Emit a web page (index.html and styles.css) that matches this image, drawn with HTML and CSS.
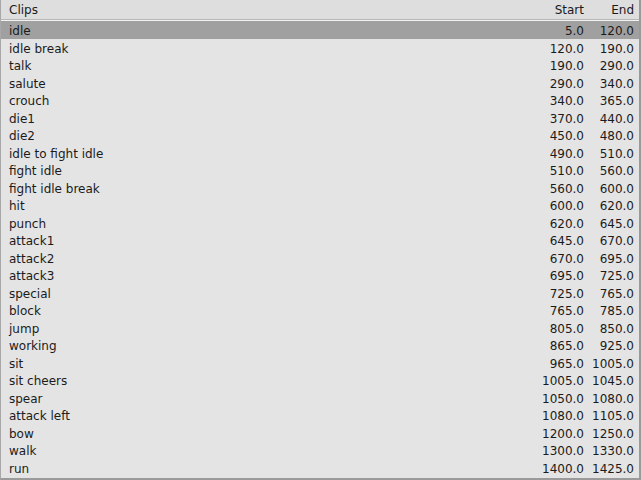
FILE: index.html
```html
<!DOCTYPE html>
<html>
<head>
<meta charset="utf-8">
<link rel="stylesheet" href="styles.css">
</head>
<body>
<div class="panel">
  <div class="header">
    <span class="name">Clips</span>
    <span class="num">Start</span>
    <span class="num end">End</span>
  </div>
  <div class="list">
    <div class="row sel"><span class="name">idle</span><span class="num">5.0</span><span class="num end">120.0</span></div>
    <div class="row"><span class="name">idle break</span><span class="num">120.0</span><span class="num end">190.0</span></div>
    <div class="row"><span class="name">talk</span><span class="num">190.0</span><span class="num end">290.0</span></div>
    <div class="row"><span class="name">salute</span><span class="num">290.0</span><span class="num end">340.0</span></div>
    <div class="row"><span class="name">crouch</span><span class="num">340.0</span><span class="num end">365.0</span></div>
    <div class="row"><span class="name">die1</span><span class="num">370.0</span><span class="num end">440.0</span></div>
    <div class="row"><span class="name">die2</span><span class="num">450.0</span><span class="num end">480.0</span></div>
    <div class="row"><span class="name">idle to fight idle</span><span class="num">490.0</span><span class="num end">510.0</span></div>
    <div class="row"><span class="name">fight idle</span><span class="num">510.0</span><span class="num end">560.0</span></div>
    <div class="row"><span class="name">fight idle break</span><span class="num">560.0</span><span class="num end">600.0</span></div>
    <div class="row"><span class="name">hit</span><span class="num">600.0</span><span class="num end">620.0</span></div>
    <div class="row"><span class="name">punch</span><span class="num">620.0</span><span class="num end">645.0</span></div>
    <div class="row"><span class="name">attack1</span><span class="num">645.0</span><span class="num end">670.0</span></div>
    <div class="row"><span class="name">attack2</span><span class="num">670.0</span><span class="num end">695.0</span></div>
    <div class="row"><span class="name">attack3</span><span class="num">695.0</span><span class="num end">725.0</span></div>
    <div class="row"><span class="name">special</span><span class="num">725.0</span><span class="num end">765.0</span></div>
    <div class="row"><span class="name">block</span><span class="num">765.0</span><span class="num end">785.0</span></div>
    <div class="row"><span class="name">jump</span><span class="num">805.0</span><span class="num end">850.0</span></div>
    <div class="row"><span class="name">working</span><span class="num">865.0</span><span class="num end">925.0</span></div>
    <div class="row"><span class="name">sit</span><span class="num">965.0</span><span class="num end">1005.0</span></div>
    <div class="row"><span class="name">sit cheers</span><span class="num">1005.0</span><span class="num end">1045.0</span></div>
    <div class="row"><span class="name">spear</span><span class="num">1050.0</span><span class="num end">1080.0</span></div>
    <div class="row"><span class="name">attack left</span><span class="num">1080.0</span><span class="num end">1105.0</span></div>
    <div class="row"><span class="name">bow</span><span class="num">1200.0</span><span class="num end">1250.0</span></div>
    <div class="row"><span class="name">walk</span><span class="num">1300.0</span><span class="num end">1330.0</span></div>
    <div class="row"><span class="name">run</span><span class="num">1400.0</span><span class="num end">1425.0</span></div>
  </div>
</div>
</body>
</html>
```
FILE: styles.css
```css
html, body {
  margin: 0;
  padding: 0;
  background: #e4e4e4;
}
.panel {
  width: 641px;
  height: 480px;
  box-sizing: border-box;
  border-left: 1px solid #a8a8a8;
  border-right: 2px solid #9a9a9a;
  border-bottom: 2px solid #9a9a9a;
  background: #e4e4e4;
  font-family: "DejaVu Sans", sans-serif;
  font-size: 12px;
  line-height: 14px;
  color: #1b1b1b;
  overflow: hidden;
}
.header {
  display: flex;
  align-items: flex-start;
  height: 20px;
  padding-top: 3px;
  box-sizing: border-box;
  background: #dedede;
  border-bottom: 1px solid #b8b8b8;
  box-shadow: 0 1px 0 #f2f2f2;
  margin-bottom: 1px;
}
.list {
  display: flex;
  flex-direction: column;
}
.row {
  display: flex;
  align-items: flex-start;
  height: 17.5px;
  padding-top: 3px;
  box-sizing: border-box;
}
.row.sel {
  background: #a0a0a0;
}
.name {
  flex: 1;
  padding-left: 8px;
}
.num {
  width: 61px;
  text-align: right;
}
.num.end {
  width: 50px;
  padding-right: 5px;
}
```
